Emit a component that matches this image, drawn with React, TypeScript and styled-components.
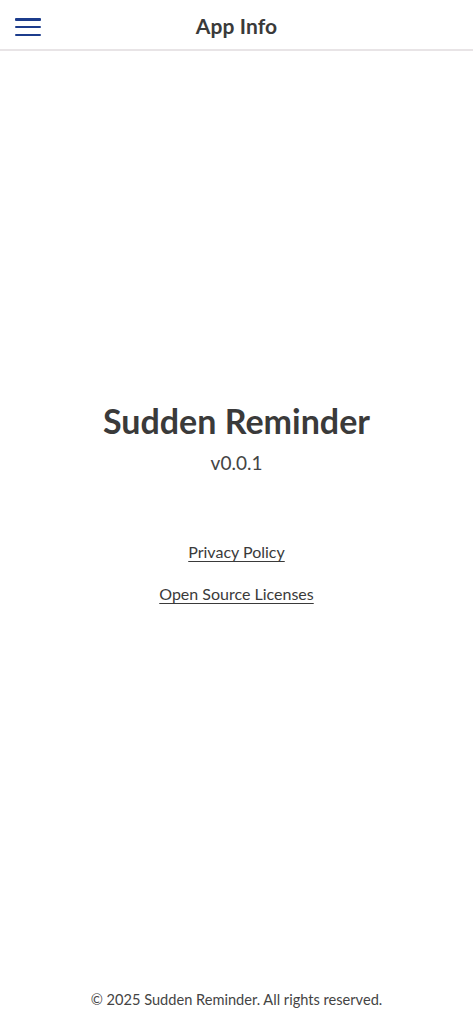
import React from "react";
import styled, { createGlobalStyle } from "styled-components";

const Global = createGlobalStyle`
  html, body { margin: 0; padding: 0; background: #ffffff; }
  body { font-family: Lato, "Noto Sans", "Liberation Sans", sans-serif; color: #333333; }
  * { box-sizing: border-box; }
`;

const Page = styled.div`
  display: flex;
  flex-direction: column;
  min-height: 100vh;
`;

const Header = styled.header`
  position: relative;
  height: 51px;
  display: flex;
  align-items: center;
  justify-content: center;
  padding-top: 2px;
  border-bottom: 2px solid #e8e4e6;
`;

const MenuButton = styled.button`
  position: absolute;
  left: 14px;
  top: 15px;
  width: 28px;
  height: 24px;
  border: none;
  background: transparent;
  display: flex;
  flex-direction: column;
  justify-content: space-between;
  padding: 3px 1px;
`;

const Bar = styled.span`
  display: block;
  height: 2.5px;
  width: 100%;
  background: #1c3c8c;
  border-radius: 1px;
`;

const Title = styled.h1`
  margin: 0;
  font-size: 21px;
  font-weight: 700;
  color: #3a3a3a;
  letter-spacing: 0.1px;
`;

const Main = styled.main`
  flex: 1;
  display: flex;
  flex-direction: column;
  align-items: center;
  justify-content: center;
  padding-bottom: 34px;
`;

const AppName = styled.h2`
  margin: 0;
  font-size: 34px;
  font-weight: 700;
  color: #3a3a3a;
  line-height: 44px;
`;

const Version = styled.div`
  margin-top: 6px;
  font-size: 19px;
  color: #444444;
  line-height: 28px;
`;

const Links = styled.nav`
  margin-top: 63px;
  display: flex;
  flex-direction: column;
  align-items: center;
  gap: 18px;
`;

const LinkItem = styled.a`
  font-size: 16px;
  color: #3a3a3a;
  text-decoration: underline;
  text-underline-offset: 3px;
  line-height: 24px;
`;

const Footer = styled.footer`
  text-align: center;
  font-size: 14.6px;
  color: #444444;
  padding: 0 0 12px;
  line-height: 24px;
`;

export default function App() {
  return (
    <Page>
      <Global />
      <Header>
        <MenuButton aria-label="menu">
          <Bar />
          <Bar />
          <Bar />
        </MenuButton>
        <Title>App Info</Title>
      </Header>
      <Main>
        <AppName>Sudden Reminder</AppName>
        <Version>v0.0.1</Version>
        <Links>
          <LinkItem href="#">Privacy Policy</LinkItem>
          <LinkItem href="#">Open Source Licenses</LinkItem>
        </Links>
      </Main>
      <Footer>© 2025 Sudden Reminder. All rights reserved.</Footer>
    </Page>
  );
}
